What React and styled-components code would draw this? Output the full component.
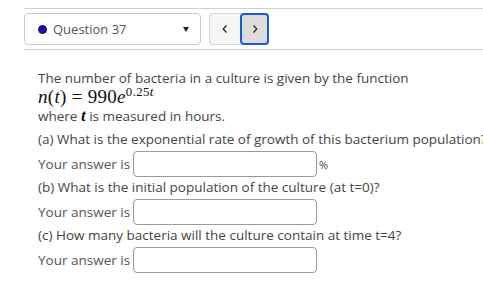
import React from "react";
import styled, { createGlobalStyle } from "styled-components";

const GlobalStyle = createGlobalStyle`
  html, body {
    margin: 0;
    padding: 0;
    background: #ffffff;
    overflow: hidden;
  }
  body {
    font-family: "Open Sans", "Noto Sans", sans-serif;
    color: #444444;
  }
`;

const questions = [
  { label: "(a) What is the exponential rate of growth of this bacterium population?", unit: "%" },
  { label: "(b) What is the initial population of the culture (at t=0)?" },
  { label: "(c) How many bacteria will the culture contain at time t=4?" },
];

const App = () => {
  return (
    <>
      <GlobalStyle />
      <Page>
        <Toolbar>
          <QuestionSelect>
            <Dot />
            <SelectLabel>Question 37</SelectLabel>
            <Caret />
          </QuestionSelect>
          <NavGroup>
            <NavButton side="left">
              <Chevron dir="left" />
            </NavButton>
            <NavButton side="right" active>
              <Chevron dir="right" />
            </NavButton>
          </NavGroup>
        </Toolbar>

        <Body>
          <Intro>
            <Line>The number of bacteria in a culture is given by the function</Line>
            <MathLine>
              <i>n</i>(<i>t</i>)<Rel>=</Rel>990<i>e</i>
              <Sup>
                0.25<i>t</i>
              </Sup>
            </MathLine>
            <Line>
              where <MathVar>t</MathVar> is measured in hours.
            </Line>
          </Intro>

          {questions.map((q) => (
            <Part key={q.label}>
              <Line>{q.label}</Line>
              <AnswerRow>
                <AnswerLabel>Your answer is</AnswerLabel>
                <AnswerInput type="text" />
                {q.unit && <Unit>{q.unit}</Unit>}
              </AnswerRow>
            </Part>
          ))}
        </Body>
      </Page>
    </>
  );
};

export default App;

const Chevron = ({ dir }) => (
  <svg width="8" height="10" viewBox="0 0 8 10">
    <path
      d={dir === "left" ? "M5.5 1.5 L2.2 5 L5.5 8.5" : "M2.5 1.5 L5.8 5 L2.5 8.5"}
      fill="none"
      stroke="#222"
      strokeWidth="1.2"
    />
  </svg>
);

const Page = styled.div`
  width: 760px;
  padding: 8px 0 0 24px;
`;

const Toolbar = styled.div`
  display: flex;
  align-items: center;
  gap: 8px;
  padding: 4px 0 4px;
  border-top: 1px solid #d0d0d0;
  border-bottom: 1px solid #d0d0d0;
`;

const QuestionSelect = styled.div`
  width: 177px;
  height: 32px;
  box-sizing: border-box;
  border: 1px solid #cccccc;
  border-radius: 4px;
  display: flex;
  align-items: center;
  padding: 0 8px 0 13px;
`;

const Dot = styled.span`
  width: 9px;
  height: 9px;
  box-sizing: border-box;
  border-radius: 50%;
  background: #2b0ab0;
  border: 1px solid #111144;
  margin-right: 6px;
`;

const SelectLabel = styled.span`
  font-size: 13px;
  color: #555555;
  flex: 1;
`;

const Caret = styled.span`
  width: 0;
  height: 0;
  border-left: 3.5px solid transparent;
  border-right: 3.5px solid transparent;
  border-top: 5px solid #222;
  margin-right: 3px;
`;

const NavGroup = styled.div`
  display: flex;
`;

const NavButton = styled.div`
  width: ${(p) => (p.side === "left" ? "31px" : "29px")};
  height: 32px;
  box-sizing: border-box;
  display: flex;
  align-items: center;
  justify-content: center;
  background: ${(p) => (p.active ? "#dcdcdc" : "#f6f6f6")};
  border: ${(p) => (p.active ? "2px solid #1a5ad6" : "1px solid #d6d6d6")};
  border-radius: 4px;
  ${(p) => p.side === "left" && "border-top-right-radius: 0; border-bottom-right-radius: 0; border-right: none;"}
`;

const Body = styled.div`
  padding: 18px 0 0 14px;
`;

const Intro = styled.div`
  margin-bottom: 3px;
`;

const Line = styled.div`
  font-size: 13.5px;
  line-height: 20px;
  color: #444444;
  white-space: nowrap;
`;

const MathLine = styled.div`
  font-family: "Liberation Serif", "DejaVu Serif", serif;
  font-size: 19px;
  line-height: 18px;
  color: #111111;
  letter-spacing: 0.3px;

  i {
    font-style: italic;
  }
`;

const Rel = styled.span`
  margin: 0 5px;
`;

const Sup = styled.sup`
  font-size: 13px;
  vertical-align: 7px;
  line-height: 0;
`;

const MathVar = styled.i`
  font-family: "Liberation Serif", "DejaVu Serif", serif;
  font-weight: bold;
  font-size: 17px;
  color: #111;
`;

const Part = styled.div`
  display: flex;
  flex-direction: column;
`;

const AnswerRow = styled.div`
  display: flex;
  align-items: center;
  margin-top: 2px;
`;

const AnswerLabel = styled.span`
  font-size: 13.5px;
  color: #555555;
  margin-right: 3px;
`;

const AnswerInput = styled.input`
  width: 184px;
  height: 26px;
  box-sizing: border-box;
  border: 1px solid #999999;
  border-radius: 4px;
  outline: none;
  padding: 0 4px;
  background: #ffffff;
`;

const Unit = styled.span`
  font-size: 11px;
  color: #444444;
  margin-left: 2px;
`;
